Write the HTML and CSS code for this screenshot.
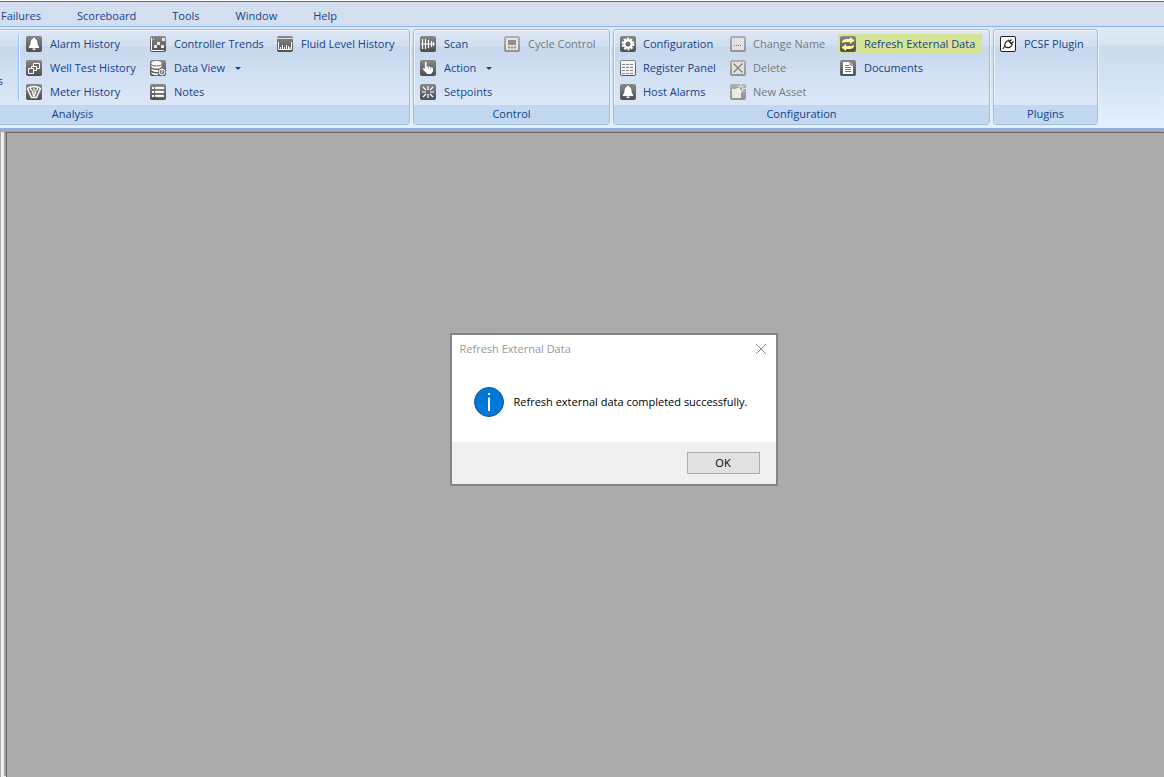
FILE: index.html
```html
<!DOCTYPE html>
<html lang="en">
<head>
<meta charset="utf-8">
<title>Refresh External Data</title>
<link rel="stylesheet" href="styles.css">
</head>
<body>
<svg class="sprite" aria-hidden="true">
  <symbol id="bell" viewBox="0 0 16 16"><path d="M8 1.800c.8 0 1.200.5 1.200 1.100 1.600.6 2.200 2 2.300 3.800.1 2.200.6 3.100 1.700 4.100v1.200H2.800v-1.200c1.100-1 1.600-1.900 1.700-4.100.1-1.800.7-3.200 2.300-3.800 0-.6.4-1.100 1.200-1.100z" fill="#fff"/><path d="M6.300 12.500h3.400c-.2 1.200-.8 1.700-1.700 1.700s-1.500-.5-1.700-1.700z" fill="#fff"/></symbol>
</svg>
<nav class="menu" aria-label="Main menu">
  <button>Failures</button><button>Scoreboard</button><button>Tools</button><button>Window</button><button>Help</button>
</nav>
<div class="ribbon">
  <section class="group analysis">
    <div class="commands">
      <div class="column preceding"><button class="command">s</button></div>
      <div class="column divided alarm">
        <button class="command"><svg class="icon" viewBox="0 0 16 16"><use href="#bell"/></svg>Alarm History</button>
        <button class="command"><svg class="icon" viewBox="0 0 16 16"><g fill="#666" stroke="#fff"><path d="M7.500 3.500h6v5h-6z"/><path d="M5.500 6.500h5v4h-5z"/><path d="M2.500 8.500h5v5h-5z"/></g></svg>Well Test History</button>
        <button class="command"><svg class="icon" viewBox="0 0 16 16"><path d="M1.500 4.500Q8 .5 14.500 4.500L10.500 13.500h-5z" fill="#777" stroke="#fff" stroke-width="1.400"/><path d="M4.500 4v2M11.500 4v2M8 13V4M5.500 5l2 7M10.500 5l-2 7" stroke="#fff"/></svg>Meter History</button>
      </div>
      <div class="column trends">
        <button class="command"><svg class="icon" viewBox="0 0 16 16"><path d="M1.500 2v12.500H14" fill="none" stroke="#fff"/><path d="M4 9h3v3H4zM7 6h3v3H7zM11 9h3v3h-3zM12 2h3v3h-3zM3 3h1v1H3z" fill="#e8e8e8"/></svg>Controller Trends</button>
        <button class="command"><svg class="icon" viewBox="0 0 16 16"><g fill="#fff"><ellipse cx="6.500" cy="3.200" rx="5" ry="2.200"/><path d="M1.500 5c1.500 2 8.500 2 10 0v2c-1.500 2-8.500 2-10 0zM1.500 8.500c1.500 1.700 5 1.700 6.500 1.300v2c-2 .4-5 .2-6.500-1.500zM1.500 12c1.500 1.500 4 1.600 6 1.300l1 1.700c-3 .5-6-.1-7-1.500z"/></g><circle cx="12" cy="12" r="3" fill="#777" stroke="#fff"/><path d="M12 9.500V12l-1 1.500" fill="none" stroke="#fff"/></svg>Data View<span class="arrow"></span></button>
        <button class="command"><svg class="icon" viewBox="0 0 16 16"><path d="M2 4h2M2 8h2M2 12h2" stroke="#fff" stroke-width="2"/><path d="M5 4.500l1-1 1 1 1-1 1 1 1-1 1 1 1-1 1 1 1-1M5 8.500l1-1 1 1 1-1 1 1 1-1 1 1 1-1 1 1 1-1M5 12.500l1-1 1 1 1-1 1 1 1-1 1 1 1-1 1 1 1-1" fill="none" stroke="#fff" stroke-width="1.400"/></svg>Notes</button>
      </div>
      <div class="column">
        <button class="command"><svg class="icon" viewBox="0 0 16 16"><path d="M0 2.500h16" stroke="#ddd"/><path d="M1.500 6v7.500h13V6M3.500 13v-2M5.500 13V9M7.500 13v-2M9.500 13V9M11.500 13v-3M13 13v-2" fill="none" stroke="#fff"/></svg>Fluid Level History</button>
      </div>
    </div>
    <h2>Analysis</h2>
  </section>
  <section class="group control">
    <div class="commands">
      <div class="column actions">
        <button class="command"><svg class="icon" viewBox="0 0 16 16"><path d="M1 8h14M2.500 3v10M5.500 3v10M8.500 4v8M11.500 5v6M13.500 6v4" stroke="#fff" stroke-width="1.200"/></svg>Scan</button>
        <button class="command"><svg class="icon" viewBox="0 0 16 16"><path d="M5 2c1.200-.5 1.600.3 1.600 1.200V7l1-.8 1.200.8 1-.5 1 1 1.400-.2.800 1.200V11l-1.800 3H7.300L3 9.500c-.5-1 .5-1.600 1.300-.9l.5.500z" fill="#fff"/><path d="M8.600 7v2M10.700 7.500v2" stroke="#777" stroke-width=".6"/></svg>Action<span class="arrow"></span></button>
        <button class="command"><svg class="icon" viewBox="0 0 16 16"><path d="M8 2v4M8 10v4M2 8h4M10 8h4M3 3l3 3M10 10l3 3M13 3l-3 3M3 13l3-3" stroke="#fff" stroke-width="1.200"/></svg>Setpoints</button>
      </div>
      <div class="column">
        <button class="command" disabled><svg class="icon" viewBox="0 0 16 16"><path d="M2 2h12v12H2z" fill="#e5e5e5"/><path d="M4 4h8v5H4zM4 10.500h2v2H4zM7 10.500h2v2H7zM10 10.500h2v2h-2z" fill="#909090"/></svg>Cycle Control</button>
      </div>
    </div>
    <h2>Control</h2>
  </section>
  <section class="group configuration">
    <div class="commands">
      <div class="column config">
        <button class="command"><svg class="icon" viewBox="0 0 16 16"><circle cx="8" cy="8" r="5.400" fill="none" stroke="#fff" stroke-width="2" stroke-dasharray="2 1.390"/><circle cx="8" cy="8" r="3.700" fill="none" stroke="#fff" stroke-width="2.400"/></svg>Configuration</button>
        <button class="command"><svg class="icon" viewBox="0 0 16 16"><path d="M1 1h14v14H1z" fill="#f2f2f2"/><path d="M2 4.500h12M2 7.500h12M2 10.500h12M2 13.500h12" stroke="#888" stroke-dasharray="3 1"/></svg>Register Panel</button>
        <button class="command"><svg class="icon" viewBox="0 0 16 16"><use href="#bell"/></svg>Host Alarms</button>
      </div>
      <div class="column config">
        <button class="command" disabled><svg class="icon" viewBox="0 0 16 16"><path d="M2 2h12v12H2z" fill="#e2e2e2"/><path d="M4 9.500h8" stroke="#777" stroke-dasharray="1 1"/></svg>Change Name</button>
        <button class="command" disabled><svg class="icon" viewBox="0 0 16 16"><path d="M2 2h12v12H2z" fill="#e2e2e2"/><path d="M3.500 3.500l9 9M12.500 3.500l-9 9" stroke="#888" stroke-width="1.500"/></svg>Delete</button>
        <button class="command" disabled><svg class="icon" viewBox="0 0 16 16"><path d="M2 5h9v9H2z" fill="#e8e8e8"/><path d="M11 0v9M6.500 4.500h9M8 1.500l6 6M14 1.500l-6 6" stroke="#f4f4f4"/><circle cx="11" cy="4.500" r="1.200" fill="#999"/></svg>New Asset</button>
      </div>
      <div class="column">
        <button class="command highlighted"><svg class="icon" viewBox="0 0 16 16"><path d="M2 7c0-3 2-4 4.500-4H10V1l4.500 3.500L10 8V6H7C5 6 4 6 2 7zM14 9c0 3-2 4-4.500 4H6v2l-4.500-3.500L6 8v2h3c2 0 3 0 5-1z" fill="#ffff96"/></svg>Refresh External Data</button>
        <button class="command"><svg class="icon" viewBox="0 0 16 16"><path d="M3 2h7l3 3v9H3z" fill="#fff"/><path d="M10 2v3h3M5 5.500h4M5 7.500h6M5 9.500h6M5 11.500h6" fill="none" stroke="#777"/></svg>Documents</button>
      </div>
    </div>
    <h2>Configuration</h2>
  </section>
  <section class="group plugins">
    <div class="commands">
      <div class="column">
        <button class="command"><svg class="icon outlined" viewBox="0 0 16 16"><g fill="none" stroke="#222" stroke-width="1.200"><path d="M5 10.500C4 8 6 5 8.500 4.500l3.500 4c-.5 2.500-4 4.500-7 2zM8 4l4.500 5M9.500 5.500l2-2M11.500 7.500l2-2M5 10.500C3.500 10.500 4 13 2.500 12.500"/></g></svg>PCSF Plugin</button>
      </div>
    </div>
    <h2>Plugins</h2>
  </section>
</div>
<main class="workspace">
  <section class="dialog" role="dialog" aria-labelledby="dialog-title">
    <header><h1 id="dialog-title">Refresh External Data</h1><button class="close" aria-label="Close"><svg viewBox="0 0 12 12"><path d="M1 1l10 10M11 1L1 11" stroke="#888"/></svg></button></header>
    <div class="message"><svg class="info" viewBox="0 0 32 32" aria-hidden="true"><circle cx="16" cy="16" r="14.500" fill="#0078d7" stroke="#075796"/><path d="M16 11.500V25M16 7v2" stroke="#fff" stroke-width="2"/></svg><p>Refresh external data completed successfully.</p></div>
    <footer><button class="ok">OK</button></footer>
  </section>
</main>
</body>
</html>
```
FILE: styles.css
```css
* { box-sizing: border-box; }
body {
  display: flex;
  flex-direction: column;
  height: 100vh;
  margin: 0;
  overflow: hidden;
  background: #ababab;
  color: #15428b;
  font: 11px/16px "Open Sans", "Noto Sans", sans-serif;
}
button { padding: 0; border: 0; background: none; color: inherit; font: inherit; white-space: nowrap; }
h1, h2, p { margin: 0; font: inherit; }
.sprite { position: absolute; width: 0; height: 0; }
.menu {
  display: flex;
  flex: none;
  gap: 36px;
  height: 27px;
  padding: 5px 1px 0;
  border-bottom: 1px solid #8db2e3;
  background: linear-gradient(#fff 1px, #5b6f7d 1px, #5b6f7d 2px, #d3dfef 2px);
}
.ribbon {
  display: flex;
  flex: none;
  gap: 3px;
  padding: 2px 0 3px;
  border-bottom: 1px solid #8db2e3;
  background: linear-gradient(#e0eaf6, #d8e4f1 18%, #c9daed 19%, #e3f1ff);
}
.group {
  flex: none;
  border: 1px solid #9fbfdb;
  border-radius: 3px;
  background: linear-gradient(#dee8f5, #d1dfef 16px, #c7d8ed 17px, #dce8f8 76px);
  box-shadow: inset 1px 1px #edf4fc, 1px 0 #e9f3ff;
}
.group h2 { height: 19px; padding-top: 1px; background: #c1d8f0; text-align: center; }
.analysis { width: 675px; margin-left: -265px; }
.control { width: 197px; }
.configuration { width: 377px; }
.plugins { width: 105px; }
.commands { display: flex; height: 75px; padding: 4px 0 0 4px; }
.analysis .commands { justify-content: flex-end; padding-right: 4px; }
.column { display: flex; flex: none; flex-direction: column; align-items: flex-start; gap: 4px; }
.analysis .column:last-child { width: 130px; }
.alarm { width: 130px; }
.trends { width: 127px; }
.actions { width: 84px; }
.config { width: 110px; }
.divided { height: 66px; padding-left: 5px; border-left: 1px solid #8fc0f5; box-shadow: inset 1px 0 #f4f9ff; }
.preceding { margin-right: 15px; padding-top: 37px; }
.command { display: flex; flex: none; align-items: center; gap: 8px; height: 20px; padding: 0 7px 0 2px; }
.preceding .command { padding: 0; }
.configuration .config .command { gap: 7px; }
.command:disabled { color: #77797d; }
.icon { width: 16px; height: 16px; border-radius: 2px; background: linear-gradient(#898989, #4f4f4f); }
.command:disabled .icon { background: linear-gradient(#b0b0b0, #929292); }
.command .outlined { background: #fff; box-shadow: inset 0 0 0 1px #222; }
.arrow { border: 3px solid transparent; border-top-color: #15428b; border-bottom: 0; margin-left: 2px; }
.highlighted { background: #d7e394; }
.workspace {
  display: flex;
  flex: 1;
  justify-content: center;
  align-items: flex-start;
  margin: 3px 0 0 6px;
  padding: 200px 0 0 56px;
  border-top: 1px solid #65656a;
  border-left: 1px solid #65656a;
  box-shadow: -2px -1px #a0a0a0, -5px 0 #f0f0f0;
}
.dialog { width: 328px; border: 2px solid #848484; background: #fff; color: #000; }
.dialog header { display: flex; justify-content: space-between; align-items: center; height: 27px; padding: 0 9px 0 8px; color: #999; }
.close { display: flex; width: 12px; height: 12px; }
.close svg { width: 12px; height: 12px; }
.message { display: flex; align-items: center; gap: 9px; height: 80px; padding: 0 21px; white-space: nowrap; }
.info { flex: none; width: 32px; height: 32px; }
.dialog footer { display: flex; justify-content: flex-end; height: 42px; padding: 10px 16px; background: #f0f0f0; }
.ok { width: 73px; height: 22px; border: 1px solid #adadad; background: #e1e1e1; }
```
